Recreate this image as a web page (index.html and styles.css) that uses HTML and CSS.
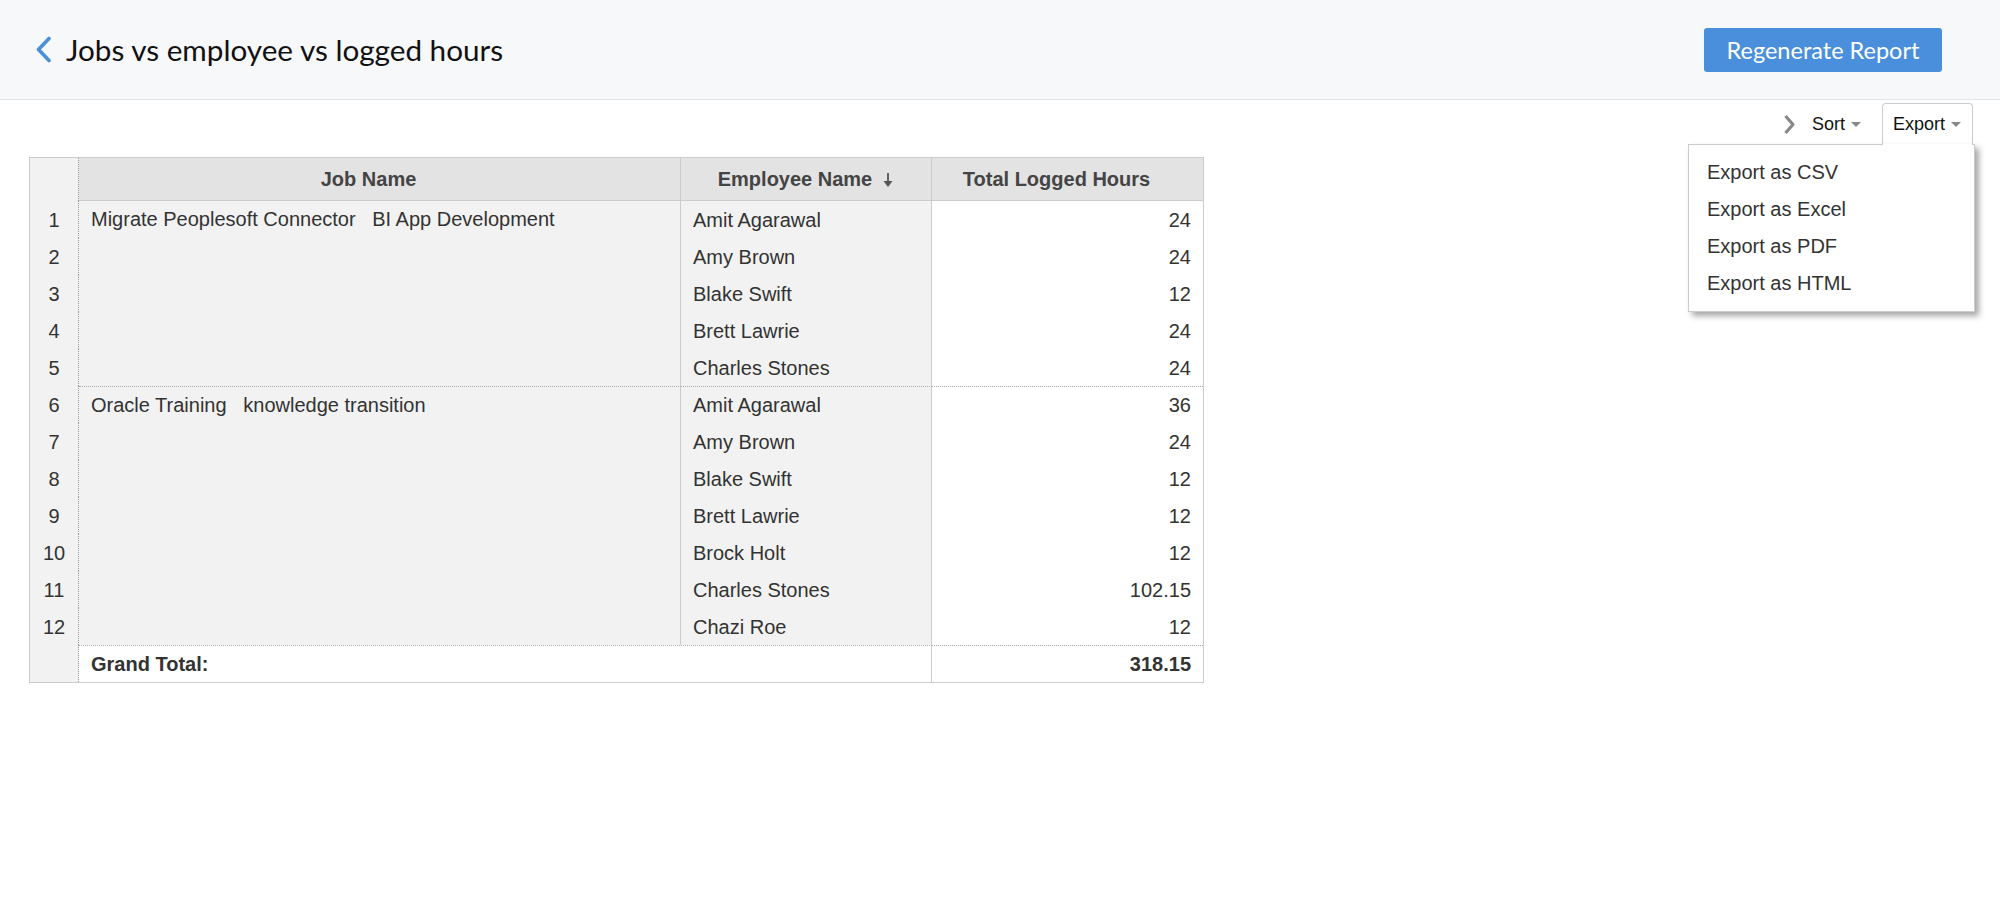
FILE: index.html
```html
<!DOCTYPE html>
<html lang="en">
<head>
    <meta charset="UTF-8">
    <meta name="viewport" content="width=device-width, initial-scale=1.0">
    <title>Jobs vs employee vs logged hours</title>
    <link rel="stylesheet" href="styles.css">
</head>
<body>
    <header class="topbar">
        <h1 class="page-title">
            <a href="#" class="back-link">
                <svg width="17" height="27" viewBox="0 0 17 27"><path d="M14 2.5 L3.5 13.5 L14 24.5" fill="none" stroke="#4a8fdc" stroke-width="3.6" stroke-linecap="round" stroke-linejoin="round"/></svg>
            </a>
            Jobs vs employee vs logged hours
        </h1>
        <button class="btn-primary">Regenerate Report</button>
    </header>

    <div class="toolbar">
        <span class="toolbar-toggle">
            <svg width="13" height="21" viewBox="0 0 13 21"><path d="M2.5 2 L10 10.5 L2.5 19" fill="none" stroke="#888" stroke-width="3.2" stroke-linejoin="round"/></svg>
        </span>
        <span class="toolbar-item">Sort <span class="caret"></span></span>
        <div class="export-tab">
            <span class="toolbar-item">Export <span class="caret"></span></span>
            <ul class="dropdown">
                <li>Export as CSV</li>
                <li>Export as Excel</li>
                <li>Export as PDF</li>
                <li>Export as HTML</li>
            </ul>
        </div>
    </div>

    <table class="report">
        <colgroup>
            <col class="col-num">
            <col class="col-job">
            <col class="col-emp">
            <col class="col-hrs">
        </colgroup>
        <thead>
            <tr>
                <th class="num"></th>
                <th class="job">Job Name<span class="sort-icon hidden"></span></th>
                <th class="emp">Employee Name<span class="sort-icon"><svg width="12" height="16" viewBox="0 0 12 16"><path d="M6 1 V13" stroke="#555" stroke-width="1.8"/><path d="M1.5 9 L6 15 L10.5 9 Z" fill="#555"/></svg></span></th>
                <th class="hrs">Total Logged Hours<span class="sort-icon hidden"></span></th>
            </tr>
        </thead>
        <tbody>
            <tr>
                <td class="num">1</td>
                <td class="job" rowspan="5">Migrate Peoplesoft Connector&nbsp;&nbsp; BI App Development</td>
                <td class="emp">Amit Agarawal</td>
                <td class="hrs">24</td>
            </tr>
            <tr><td class="num">2</td><td class="emp">Amy Brown</td><td class="hrs">24</td></tr>
            <tr><td class="num">3</td><td class="emp">Blake Swift</td><td class="hrs">12</td></tr>
            <tr><td class="num">4</td><td class="emp">Brett Lawrie</td><td class="hrs">24</td></tr>
            <tr><td class="num">5</td><td class="emp">Charles Stones</td><td class="hrs">24</td></tr>
            <tr class="group-start">
                <td class="num">6</td>
                <td class="job" rowspan="7">Oracle Training&nbsp;&nbsp; knowledge transition</td>
                <td class="emp">Amit Agarawal</td>
                <td class="hrs">36</td>
            </tr>
            <tr><td class="num">7</td><td class="emp">Amy Brown</td><td class="hrs">24</td></tr>
            <tr><td class="num">8</td><td class="emp">Blake Swift</td><td class="hrs">12</td></tr>
            <tr><td class="num">9</td><td class="emp">Brett Lawrie</td><td class="hrs">12</td></tr>
            <tr><td class="num">10</td><td class="emp">Brock Holt</td><td class="hrs">12</td></tr>
            <tr><td class="num">11</td><td class="emp">Charles Stones</td><td class="hrs">102.15</td></tr>
            <tr><td class="num">12</td><td class="emp">Chazi Roe</td><td class="hrs">12</td></tr>
            <tr class="group-start total">
                <td class="num"></td>
                <td class="label" colspan="2">Grand Total:</td>
                <td class="hrs">318.15</td>
            </tr>
        </tbody>
    </table>
</body>
</html>
```

FILE: styles.css
```css
* {
    margin: 0;
    padding: 0;
    box-sizing: border-box;
}

body {
    background: #fff;
    font-family: 'Liberation Sans', Arial, sans-serif;
    color: #333;
}

.topbar {
    display: flex;
    justify-content: space-between;
    align-items: center;
    height: 100px;
    padding: 0 58px 0 35px;
    background: #f7f8fa;
    border-bottom: 1px solid #e3e4e6;
}

.page-title {
    display: flex;
    align-items: center;
    font-family: Lato, sans-serif;
    font-weight: normal;
    font-size: 29.7px;
    color: #111;
}

.back-link {
    display: flex;
    margin-right: 14px;
}

.btn-primary {
    width: 238px;
    height: 44px;
    background: #4a8fdc;
    border: none;
    border-radius: 3px;
    color: #fff;
    font-family: Lato, sans-serif;
    font-size: 23.5px;
    cursor: pointer;
}

.toolbar {
    display: flex;
    justify-content: flex-end;
    align-items: center;
    height: 42px;
    margin-top: 3px;
    padding-right: 27px;
    font-size: 18px;
    color: #111;
}

.toolbar-toggle {
    display: flex;
    margin-right: 16px;
}

.toolbar-item {
    display: flex;
    align-items: center;
    cursor: pointer;
}

.caret {
    display: inline-block;
    width: 0;
    height: 0;
    margin-left: 6px;
    border-left: 5px solid transparent;
    border-right: 5px solid transparent;
    border-top: 5px solid #888;
}

.export-tab {
    position: relative;
    display: flex;
    align-items: center;
    height: 42px;
    margin-left: 21px;
    padding: 0 11px 0 10px;
    background: #fff;
    border: 1px solid #ccc;
    border-bottom: none;
    border-radius: 4px 4px 0 0;
}

.export-tab::after {
    content: "";
    position: absolute;
    left: 0;
    right: 0;
    bottom: -1px;
    height: 2px;
    background: #fff;
    z-index: 3;
}

.dropdown {
    position: absolute;
    top: 40px;
    right: -3px;
    width: 287px;
    padding: 9px 0;
    list-style: none;
    background: #fff;
    border: 1px solid #ccc;
    box-shadow: 4px 4px 6px rgba(0, 0, 0, 0.35);
    z-index: 2;
}

.dropdown li {
    padding-left: 18px;
    line-height: 37px;
    font-size: 20px;
    color: #333;
    cursor: pointer;
}

.report {
    margin: 12px 0 0 29px;
    width: 1175px;
    table-layout: fixed;
    border-collapse: separate;
    border-spacing: 0;
    border: 1px solid #ccc;
    font-size: 20px;
}

.col-num { width: 49px; }
.col-job { width: 602px; }
.col-emp { width: 251px; }
.col-hrs { width: 271px; }

.report th,
.report td {
    height: 37px;
    line-height: 36px;
    padding: 0 12px;
    white-space: nowrap;
    font-weight: normal;
}

.report th {
    height: 43px;
    text-align: center;
    font-weight: bold;
    color: #444;
    background: #e3e3e3;
    border-bottom: 1px solid #ccc;
}

.report .num {
    padding: 0;
    text-align: center;
    background: #f2f2f2;
    border-right: 1px dotted #999;
}

.report th.num {
    border-bottom: none;
}

.report .job,
.report .emp {
    border-right: 1px solid #ccc;
}

.report td.job,
.report td.emp {
    background: #f2f2f2;
}

.report td.job {
    vertical-align: top;
}

.report td.hrs {
    text-align: right;
    background: #fff;
}

.sort-icon {
    display: inline-block;
    width: 12px;
    margin-left: 10px;
    vertical-align: -2px;
}

.sort-icon svg {
    display: block;
}

.sort-icon.hidden {
    visibility: hidden;
}

.report .group-start td:not(.num) {
    border-top: 1px dotted #aaa;
}

.report .total td {
    font-weight: bold;
}

.report .total .label {
    background: #fff;
    border-right: 1px solid #ccc;
}
```
